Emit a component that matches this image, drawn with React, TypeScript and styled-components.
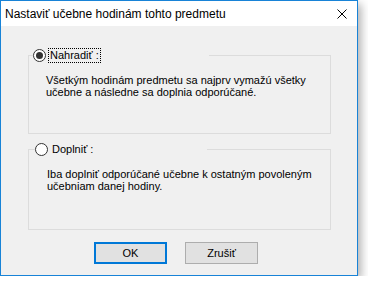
import React from 'react';
import styled, { createGlobalStyle } from 'styled-components';

const GlobalStyle = createGlobalStyle`
  html, body {
    margin: 0;
    padding: 0;
    background: #ffffff;
  }
  body {
    font-family: "Liberation Sans", Arial, sans-serif;
    font-size: 11px;
    color: #000;
  }
`;

const Window = styled.div`
  box-sizing: border-box;
  width: 358px;
  height: 276px;
  border: 1px solid #1883d7;
  background: #f0f0f0;
  display: flex;
  flex-direction: column;
  box-shadow: 3px 4px 9px rgba(0, 0, 0, 0.32);
`;

const TitleBar = styled.div`
  height: 25px;
  background: #ffffff;
  display: flex;
  align-items: center;
  justify-content: space-between;
  padding: 0 10px 0 4px;
`;

const Title = styled.div`
  font-size: 12px;
  padding-top: 1px;
`;

const CloseIcon = styled.svg`
  width: 10px;
  height: 10px;
  margin-top: 1px;
`;

const Body = styled.div`
  flex: 1;
  display: flex;
  flex-direction: column;
  padding: 21px 0 0 27px;
`;

const Group = styled.fieldset<{ $gap: number; $height: number }>`
  box-sizing: border-box;
  width: 303px;
  height: ${(p) => p.$height}px;
  margin: ${(p) => p.$gap}px 0 0 0;
  padding: 0;
  border: 1px solid #dcdcdc;
`;

const Legend = styled.legend<{ $shift: number }>`
  box-sizing: border-box;
  width: ${(p) => 176 - p.$shift * 2}px;
  height: 16px;
  margin-left: ${(p) => 4 + p.$shift}px;
  padding: 0;
  display: flex;
  align-items: center;
  gap: 3px;
`;

const Radio = styled.span<{ $checked: boolean }>`
  box-sizing: border-box;
  width: 13px;
  height: 13px;
  border: 1px solid #333;
  border-radius: 50%;
  background: #fff;
  display: flex;
  align-items: center;
  justify-content: center;
  &::after {
    content: '';
    display: ${(p) => (p.$checked ? 'block' : 'none')};
    width: 7px;
    height: 7px;
    border-radius: 50%;
    background: #333;
  }
`;

const RadioLabel = styled.span<{ $focused: boolean }>`
  padding: 0 1px;
  line-height: 13px;
  outline: ${(p) => (p.$focused ? '1px dotted #000' : 'none')};
`;

const Description = styled.div<{ $shift: number }>`
  padding: 11px 0 0 ${(p) => 17 + p.$shift}px;
  line-height: 12px;
  white-space: nowrap;
`;

const Buttons = styled.div`
  display: flex;
  gap: 18px;
  margin-top: 12px;
  padding-left: 66px;
`;

const Button = styled.button<{ $primary?: boolean }>`
  box-sizing: border-box;
  width: 73px;
  height: 22px;
  padding: 0;
  font-family: "Liberation Sans", Arial, sans-serif;
  font-size: 11px;
  color: #000;
  background: #e1e1e1;
  border: ${(p) => (p.$primary ? '2px solid #0078d7' : '1px solid #adadad')};
`;

const App: React.FC = () => {
  return (
    <>
      <GlobalStyle />
      <Window>
        <TitleBar>
          <Title>Nastaviť učebne hodinám tohto predmetu</Title>
          <CloseIcon viewBox="0 0 10 10">
            <path d="M0.5 0.5 L9.5 9.5 M9.5 0.5 L0.5 9.5" stroke="#000" strokeWidth="1" />
          </CloseIcon>
        </TitleBar>
        <Body>
          <Group $gap={0} $height={87}>
            <Legend $shift={0}>
              <Radio $checked />
              <RadioLabel $focused>Nahradiť :</RadioLabel>
            </Legend>
            <Description $shift={0}>
              Všetkým hodinám predmetu sa najprv vymažú všetky
              <br />
              učebne a následne sa doplnia odporúčané.
            </Description>
          </Group>
          <Group $gap={7} $height={89}>
            <Legend $shift={2}>
              <Radio $checked={false} />
              <RadioLabel $focused={false}>Doplniť :</RadioLabel>
            </Legend>
            <Description $shift={1}>
              Iba doplniť odporúčané učebne k ostatným povoleným
              <br />
              učebniam danej hodiny.
            </Description>
          </Group>
          <Buttons>
            <Button $primary>OK</Button>
            <Button>Zrušiť</Button>
          </Buttons>
        </Body>
      </Window>
    </>
  );
};

export default App;
